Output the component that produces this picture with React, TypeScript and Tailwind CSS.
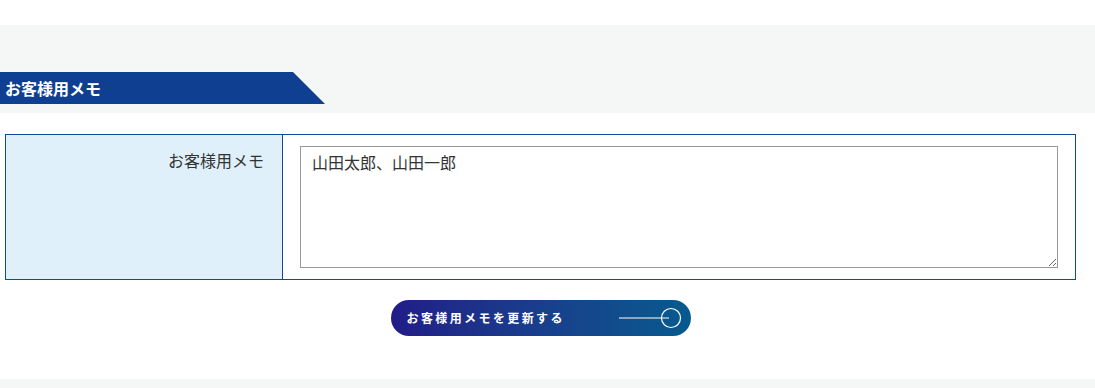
export default function App() {
  const font = { fontFamily: '"Noto Sans CJK JP", "Noto Sans", sans-serif' }

  return (
    <div className="w-[1095px] h-[388px] bg-white overflow-hidden" style={font}>
      <div className="h-[25px]" />

      {/* Section header band */}
      <section className="h-[88px] bg-[#f5f7f7] flex flex-col justify-end pb-[9px]">
        <h2 className="relative h-[32px] w-[293px] bg-[#0f3f91] text-white font-bold text-[16px] leading-[32px] pl-[5px]">
          お客様用メモ
          <span className="absolute top-0 right-[-32px] w-0 h-0 border-t-[32px] border-t-transparent border-l-[32px] border-l-[#0f3f91]" />
        </h2>
      </section>

      {/* Memo table */}
      <div className="pt-[21px] px-[5px] pr-[19px]">
        <div className="flex border border-[#0c4b97] h-[146px]">
          <div className="w-[277px] bg-[#dff0fa] border-r border-[#0c4b97] text-right pr-[18px] pt-[14px] text-[16px] leading-[22px] text-[#333]">
            お客様用メモ
          </div>
          <div className="flex-1 pl-[17px] pr-[17px] pt-[11px]">
            <textarea
              defaultValue="山田太郎、山田一郎"
              className="block w-full h-[122px] border border-[#999] bg-white px-[11px] pt-[3px] text-[16px] leading-[24px] text-[#333] outline-none resize-y"
              style={font}
            />
          </div>
        </div>
      </div>

      {/* Submit */}
      <div className="flex justify-center pt-[20px] pr-[14px]">
        <button
          type="button"
          className="relative w-[300px] h-[36px] rounded-full bg-gradient-to-r from-[#211c88] to-[#055a8e] text-white font-bold text-[12px] tracking-[0.2em] text-left pl-[16px]"
          style={font}
        >
          お客様用メモを更新する
          <svg className="absolute left-[226px] top-[7px]" width="66" height="22" viewBox="0 0 66 22">
            <line x1="2" y1="11" x2="52" y2="11" stroke="white" strokeWidth="1" />
            <circle cx="54" cy="11" r="9.5" fill="none" stroke="white" strokeWidth="1.2" />
          </svg>
        </button>
      </div>

      <div className="mt-[43px] h-[20px] bg-[#f5f7f7]" />
    </div>
  )
}
